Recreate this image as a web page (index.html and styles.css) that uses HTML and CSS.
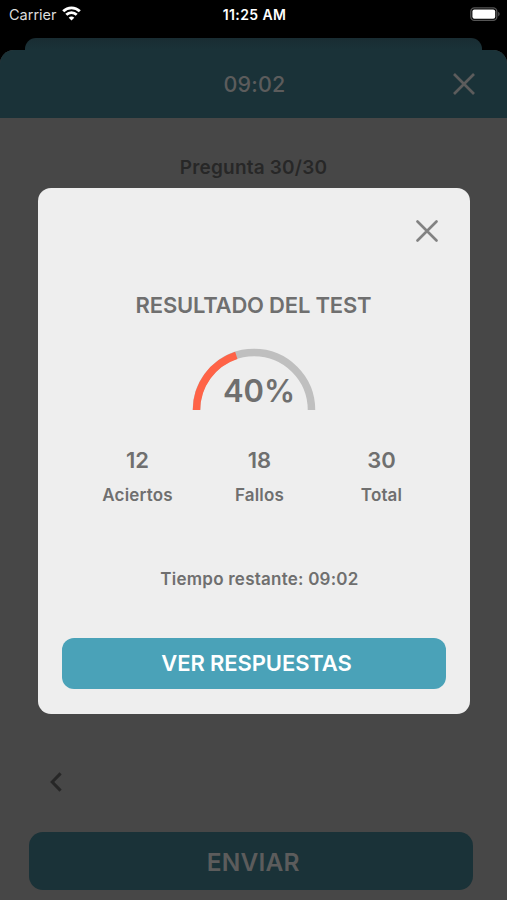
FILE: index.html
```html
<!DOCTYPE html>
<html lang="es">
<head>
  <meta charset="UTF-8" />
  <meta name="viewport" content="width=device-width, initial-scale=1.0" />
  <title>Resultado del test</title>
  <link rel="stylesheet" href="styles.css">
</head>
<body>
  <div class="status-bar">
    <div class="carrier">
      <span class="carrier-name">Carrier</span>
      <svg class="wifi" width="19" height="15" viewBox="0 0 19 15" fill="none" stroke="#fff" stroke-width="2.8">
        <path d="M1.2 5.2a11.8 11.8 0 0 1 16.6 0" />
        <path d="M4.3 8.7a7.4 7.4 0 0 1 10.4 0" />
        <path d="M9.5 14.6l-2.8-2.9a3.9 3.9 0 0 1 5.6 0z" fill="#fff" stroke="none" />
      </svg>
    </div>
    <span class="clock">11:25 AM</span>
    <svg class="battery" width="30" height="15" viewBox="0 0 30 15">
      <rect x="0.8" y="0.8" width="26" height="12.6" rx="3.6" fill="none" stroke="#555" stroke-width="1.3" />
      <rect x="2.4" y="2.4" width="22.8" height="9.4" rx="2" fill="#fff" />
      <path d="M28.2 4.8q1.5.8 1.5 2.3t-1.5 2.3z" fill="#555" />
    </svg>
  </div>

  <div class="sheet-behind"></div>
  <main class="sheet">
    <header class="sheet-header">
      <span class="timer">09:02</span>
      <svg class="sheet-close" width="22" height="22" viewBox="0 0 22 22" fill="none" stroke="#5c5c5c" stroke-width="2.7">
        <path d="M1 1l20 20M21 1L1 21" />
      </svg>
    </header>
    <h2 class="question"><span>Pregunta 30/30</span></h2>
    <svg class="prev" width="12" height="20" viewBox="0 0 12 20" fill="none" stroke="#272727" stroke-width="3">
      <path d="M10.6 1.4L2.2 10l8.4 8.6" />
    </svg>
    <button class="send"><span>ENVIAR</span></button>
  </main>

  <div class="overlay">
    <section class="modal">
      <svg class="modal-close" width="22" height="22" viewBox="0 0 22 22" fill="none" stroke="#828282" stroke-width="2.6" stroke-linecap="round">
        <path d="M1.5 1.5l19 19M20.5 1.5l-19 19" />
      </svg>
      <h1 class="modal-title">RESULTADO DEL TEST</h1>
      <div class="gauge">
        <svg width="124" height="62" viewBox="0 0 124 62" fill="none" stroke-width="7.5">
          <path d="M4.5 62a57.5 57.5 0 0 1 115 0" stroke="#bfbfbf" />
          <path d="M4.5 62a57.5 57.5 0 0 1 115 0" stroke="#ff6347" pathLength="100" stroke-dasharray="40 100" />
        </svg>
        <span class="percent">40%</span>
      </div>
      <div class="stats">
        <div class="stat"><b>12</b><span>Aciertos</span></div>
        <div class="stat"><b>18</b><span>Fallos</span></div>
        <div class="stat"><b>30</b><span>Total</span></div>
      </div>
      <p class="remaining">Tiempo restante: 09:02</p>
      <button class="answers"><span>VER RESPUESTAS</span></button>
    </section>
  </div>
</body>
</html>
```

FILE: styles.css
```css
:root {
  --teal: #4aa2b8;
  --teal-dim: #1a3238;
  --page-dim: #474747;
  --card: #eeeeee;
  --text: #6f6f6f;
}

* {
  box-sizing: border-box;
}

body {
  margin: 0;
  height: 900px;
  display: flex;
  flex-direction: column;
  overflow: hidden;
  background: #000;
  font-family: Inter, "Liberation Sans", sans-serif;
  white-space: nowrap;
}

h1, h2, p {
  margin: 0;
}

button {
  border: 0;
  padding: 0;
  font-family: inherit;
}

/* status bar */
.status-bar {
  height: 38px;
  padding: 0 7px 10px 9px;
  display: grid;
  grid-template-columns: 1fr auto 1fr;
  align-items: center;
  color: #fff;
}

.carrier {
  display: flex;
  align-items: center;
  gap: 5px;
}

.carrier-name {
  color: #dcdcdc;
  font-size: 14.5px;
}

.wifi {
  margin-top: -2px;
}

.clock {
  font-size: 14px;
  font-weight: 600;
  letter-spacing: 0.4px;
}

.battery {
  justify-self: end;
}

/* quiz sheet */
.sheet-behind {
  height: 12px;
  margin: 0 25px;
  background: linear-gradient(#192c32, var(--teal-dim));
  border-radius: 11px 11px 0 0;
}

.sheet {
  flex: 1;
  display: flex;
  flex-direction: column;
  background: var(--page-dim);
  border-radius: 14px 14px 0 0;
  overflow: hidden;
}

.sheet-header {
  height: 68px;
  padding: 0 32px;
  display: grid;
  grid-template-columns: 1fr auto 1fr;
  align-items: center;
  background: var(--teal-dim);
}

.timer {
  grid-column: 2;
  padding-left: 2px;
  color: #5c5c5c;
  font-size: 21.5px;
  font-weight: 500;
  letter-spacing: 0.2px;
}

.sheet-close {
  justify-self: end;
}

.question {
  margin-top: 37px;
  text-align: center;
  color: #272727;
  font-size: 19px;
  line-height: 26px;
  font-weight: 600;
  letter-spacing: 0.2px;
}

.prev {
  margin: auto 0 40px 50px;
}

.send {
  height: 58px;
  margin: 0 34.5px 10px 29px;
  padding: 2px 0 0 5px;
  flex-shrink: 0;
  border-radius: 14px;
  background: var(--teal-dim);
  color: #5c5c5c;
  font-size: 24.5px;
  font-weight: 600;
  letter-spacing: 0.2px;
}

/* result modal */
.overlay {
  position: absolute;
  inset: 0;
  padding-top: 1px;
  display: flex;
  align-items: center;
  justify-content: center;
}

.modal {
  width: 432px;
  height: 526px;
  padding: 32px 24px 25px;
  display: flex;
  flex-direction: column;
  align-items: center;
  background: var(--card);
  border-radius: 13px;
  color: var(--text);
}

.modal-close {
  align-self: flex-end;
  margin-right: 8px;
}

.modal-title {
  margin-top: 48px;
  font-size: 22px;
  line-height: 30px;
  font-weight: 600;
  letter-spacing: -0.2px;
}

.gauge {
  margin-top: 28px;
  height: 62px;
  display: grid;
  justify-items: center;
  align-items: end;
}

.gauge > * {
  grid-area: 1 / 1;
}

.percent {
  padding-left: 11px;
  font-size: 31px;
  line-height: 38px;
  font-weight: 600;
}

.stats {
  width: 366px;
  margin: 34px 0 0 12px;
  display: grid;
  grid-template-columns: repeat(3, 1fr);
}

.stat {
  display: flex;
  flex-direction: column;
  align-items: center;
}

.stat b {
  font-size: 22px;
  line-height: 32px;
  font-weight: 600;
}

.stat span {
  margin-top: 8px;
  font-size: 17px;
  line-height: 22px;
  font-weight: 600;
  letter-spacing: 0.15px;
}

.remaining {
  margin: 62px 0 0 12px;
  font-size: 17px;
  line-height: 22px;
  font-weight: 600;
  letter-spacing: 0.23px;
}

.answers {
  align-self: stretch;
  height: 51px;
  margin-top: auto;
  padding-left: 6px;
  border-radius: 12px;
  background: var(--teal);
  color: #fff;
  font-size: 22px;
  font-weight: 600;
  letter-spacing: -0.1px;
}
```
